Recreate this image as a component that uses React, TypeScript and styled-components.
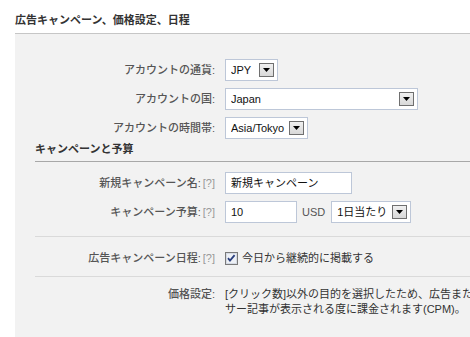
import { FC, ReactNode } from "react";
import styled, { createGlobalStyle } from "styled-components";

const GlobalStyle = createGlobalStyle`
  html, body {
    margin: 0;
    padding: 0;
    background: #fff;
    overflow: hidden;
  }
  body {
    font-family: "Liberation Sans", "Noto Sans CJK JP", sans-serif;
    font-size: 11px;
    color: #333;
  }
`;

const Page = styled.div`
  width: 620px;
  height: 337px;
  padding: 13px 0 0 15px;
  box-sizing: border-box;
  display: flex;
  flex-direction: column;
`;

const Title = styled.h2`
  margin: 0;
  font-size: 11px;
  font-weight: bold;
  color: #333;
  line-height: 14px;
  padding-bottom: 6px;
  border-bottom: 1px solid #c6c6c6;
`;

const Panel = styled.div`
  flex: 1;
  background: #f2f2f2;
  padding: 22px 0 0 20px;
`;

const SectionTitle = styled.h3`
  margin: 0;
  font-size: 11px;
  font-weight: bold;
  color: #333;
  line-height: 12px;
  padding-bottom: 6px;
  border-bottom: 1px solid #a8a8a8;
`;

const Group = styled.div<{ $top?: number }>`
  padding-top: ${(p) => p.$top ?? 0}px;
  display: flex;
  flex-direction: column;
`;

const Separator = styled.hr<{ $above: number; $below: number }>`
  margin: ${(p) => p.$above}px 0 ${(p) => p.$below}px;
  border: 0;
  border-top: 1px solid #dadada;
  height: 0;
`;

const Row = styled.div<{ $top?: boolean }>`
  display: flex;
  align-items: ${(p) => (p.$top ? "flex-start" : "center")};
  min-height: 28px;
  margin-bottom: ${(p) => (p.$top ? 0 : 1)}px;
`;

const Label = styled.label`
  width: 180px;
  flex: none;
  text-align: right;
  color: #555;
  font-weight: 500;
  line-height: 15px;
  white-space: nowrap;
`;

const Help = styled.span`
  color: #999;
  font-weight: normal;
  margin-left: 2px;
`;

const Value = styled.div`
  margin-left: 10px;
  display: flex;
  align-items: center;
  line-height: 15px;
`;

const Box = styled.div<{ $width: number }>`
  width: ${(p) => p.$width}px;
  height: 22px;
  box-sizing: border-box;
  border: 1px solid #bdc7d8;
  background: #fff;
  display: flex;
  align-items: center;
  padding: 0 3px 0 5px;
  color: #111;
`;

const BoxText = styled.span`
  flex: 1;
  white-space: nowrap;
  overflow: hidden;
`;

const ArrowButton = styled.span`
  flex: none;
  width: 15px;
  height: 14px;
  box-sizing: border-box;
  border: 1px solid #6f6f6f;
  background: linear-gradient(#f0f0f0, #d8d8d8);
  display: flex;
  align-items: center;
  justify-content: center;
  margin-left: 4px;
`;

const Unit = styled.span`
  color: #555;
  margin: 0 6px 0 5px;
`;

const CheckText = styled.span`
  color: #333;
  margin-left: 4px;
`;

const Paragraph = styled.p`
  margin: 0;
  color: #333;
  line-height: 15px;
  white-space: nowrap;
`;

const Select: FC<{ width: number; children: ReactNode }> = ({ width, children }) => (
  <Box $width={width}>
    <BoxText>{children}</BoxText>
    <ArrowButton>
      <svg width="7" height="4" viewBox="0 0 7 4">
        <path d="M0 0h7L3.5 4z" fill="#000" />
      </svg>
    </ArrowButton>
  </Box>
);

const CheckBox: FC = () => (
  <svg width="13" height="13" viewBox="0 0 13 13">
    <rect x="0.5" y="0.5" width="12" height="12" fill="#fff" stroke="#7a7a7a" />
    <rect x="1.5" y="1.5" width="10" height="10" fill="#eef1f6" stroke="#d6dbe4" />
    <path d="M3 6.2l2 2.4 4.6-5.4" fill="none" stroke="#2a3f7e" strokeWidth="1.8" />
  </svg>
);

export default function App() {
  return (
    <>
      <GlobalStyle />
      <Page>
        <Title>広告キャンペーン、価格設定、日程</Title>
        <Panel>
          <Group>
            <Row>
              <Label>アカウントの通貨:</Label>
              <Value>
                <Select width={53}>JPY</Select>
              </Value>
            </Row>
            <Row>
              <Label>アカウントの国:</Label>
              <Value>
                <Select width={193}>Japan</Select>
              </Value>
            </Row>
            <Row>
              <Label>アカウントの時間帯:</Label>
              <Value>
                <Select width={83}>Asia/Tokyo</Select>
              </Value>
            </Row>
          </Group>
          <SectionTitle>キャンペーンと予算</SectionTitle>
          <Group $top={7}>
            <Row>
              <Label>
                新規キャンペーン名:<Help>[?]</Help>
              </Label>
              <Value>
                <Box $width={127}>
                  <BoxText>新規キャンペーン</BoxText>
                </Box>
              </Value>
            </Row>
            <Row>
              <Label>
                キャンペーン予算:<Help>[?]</Help>
              </Label>
              <Value>
                <Box $width={72}>
                  <BoxText>10</BoxText>
                </Box>
                <Unit>USD</Unit>
                <Select width={80}>1日当たり</Select>
              </Value>
            </Row>
          </Group>
          <Separator $above={9} $below={7} />
          <Row>
            <Label>
              広告キャンペーン日程:<Help>[?]</Help>
            </Label>
            <Value>
              <CheckBox />
              <CheckText>今日から継続的に掲載する</CheckText>
            </Value>
          </Row>
          <Separator $above={4} $below={10} />
          <Row $top>
            <Label>価格設定:</Label>
            <Value>
              <Paragraph>
                [クリック数]以外の目的を選択したため、広告またはスポン
                <br />
                サー記事が表示される度に課金されます(CPM)。
              </Paragraph>
            </Value>
          </Row>
        </Panel>
      </Page>
    </>
  );
}
